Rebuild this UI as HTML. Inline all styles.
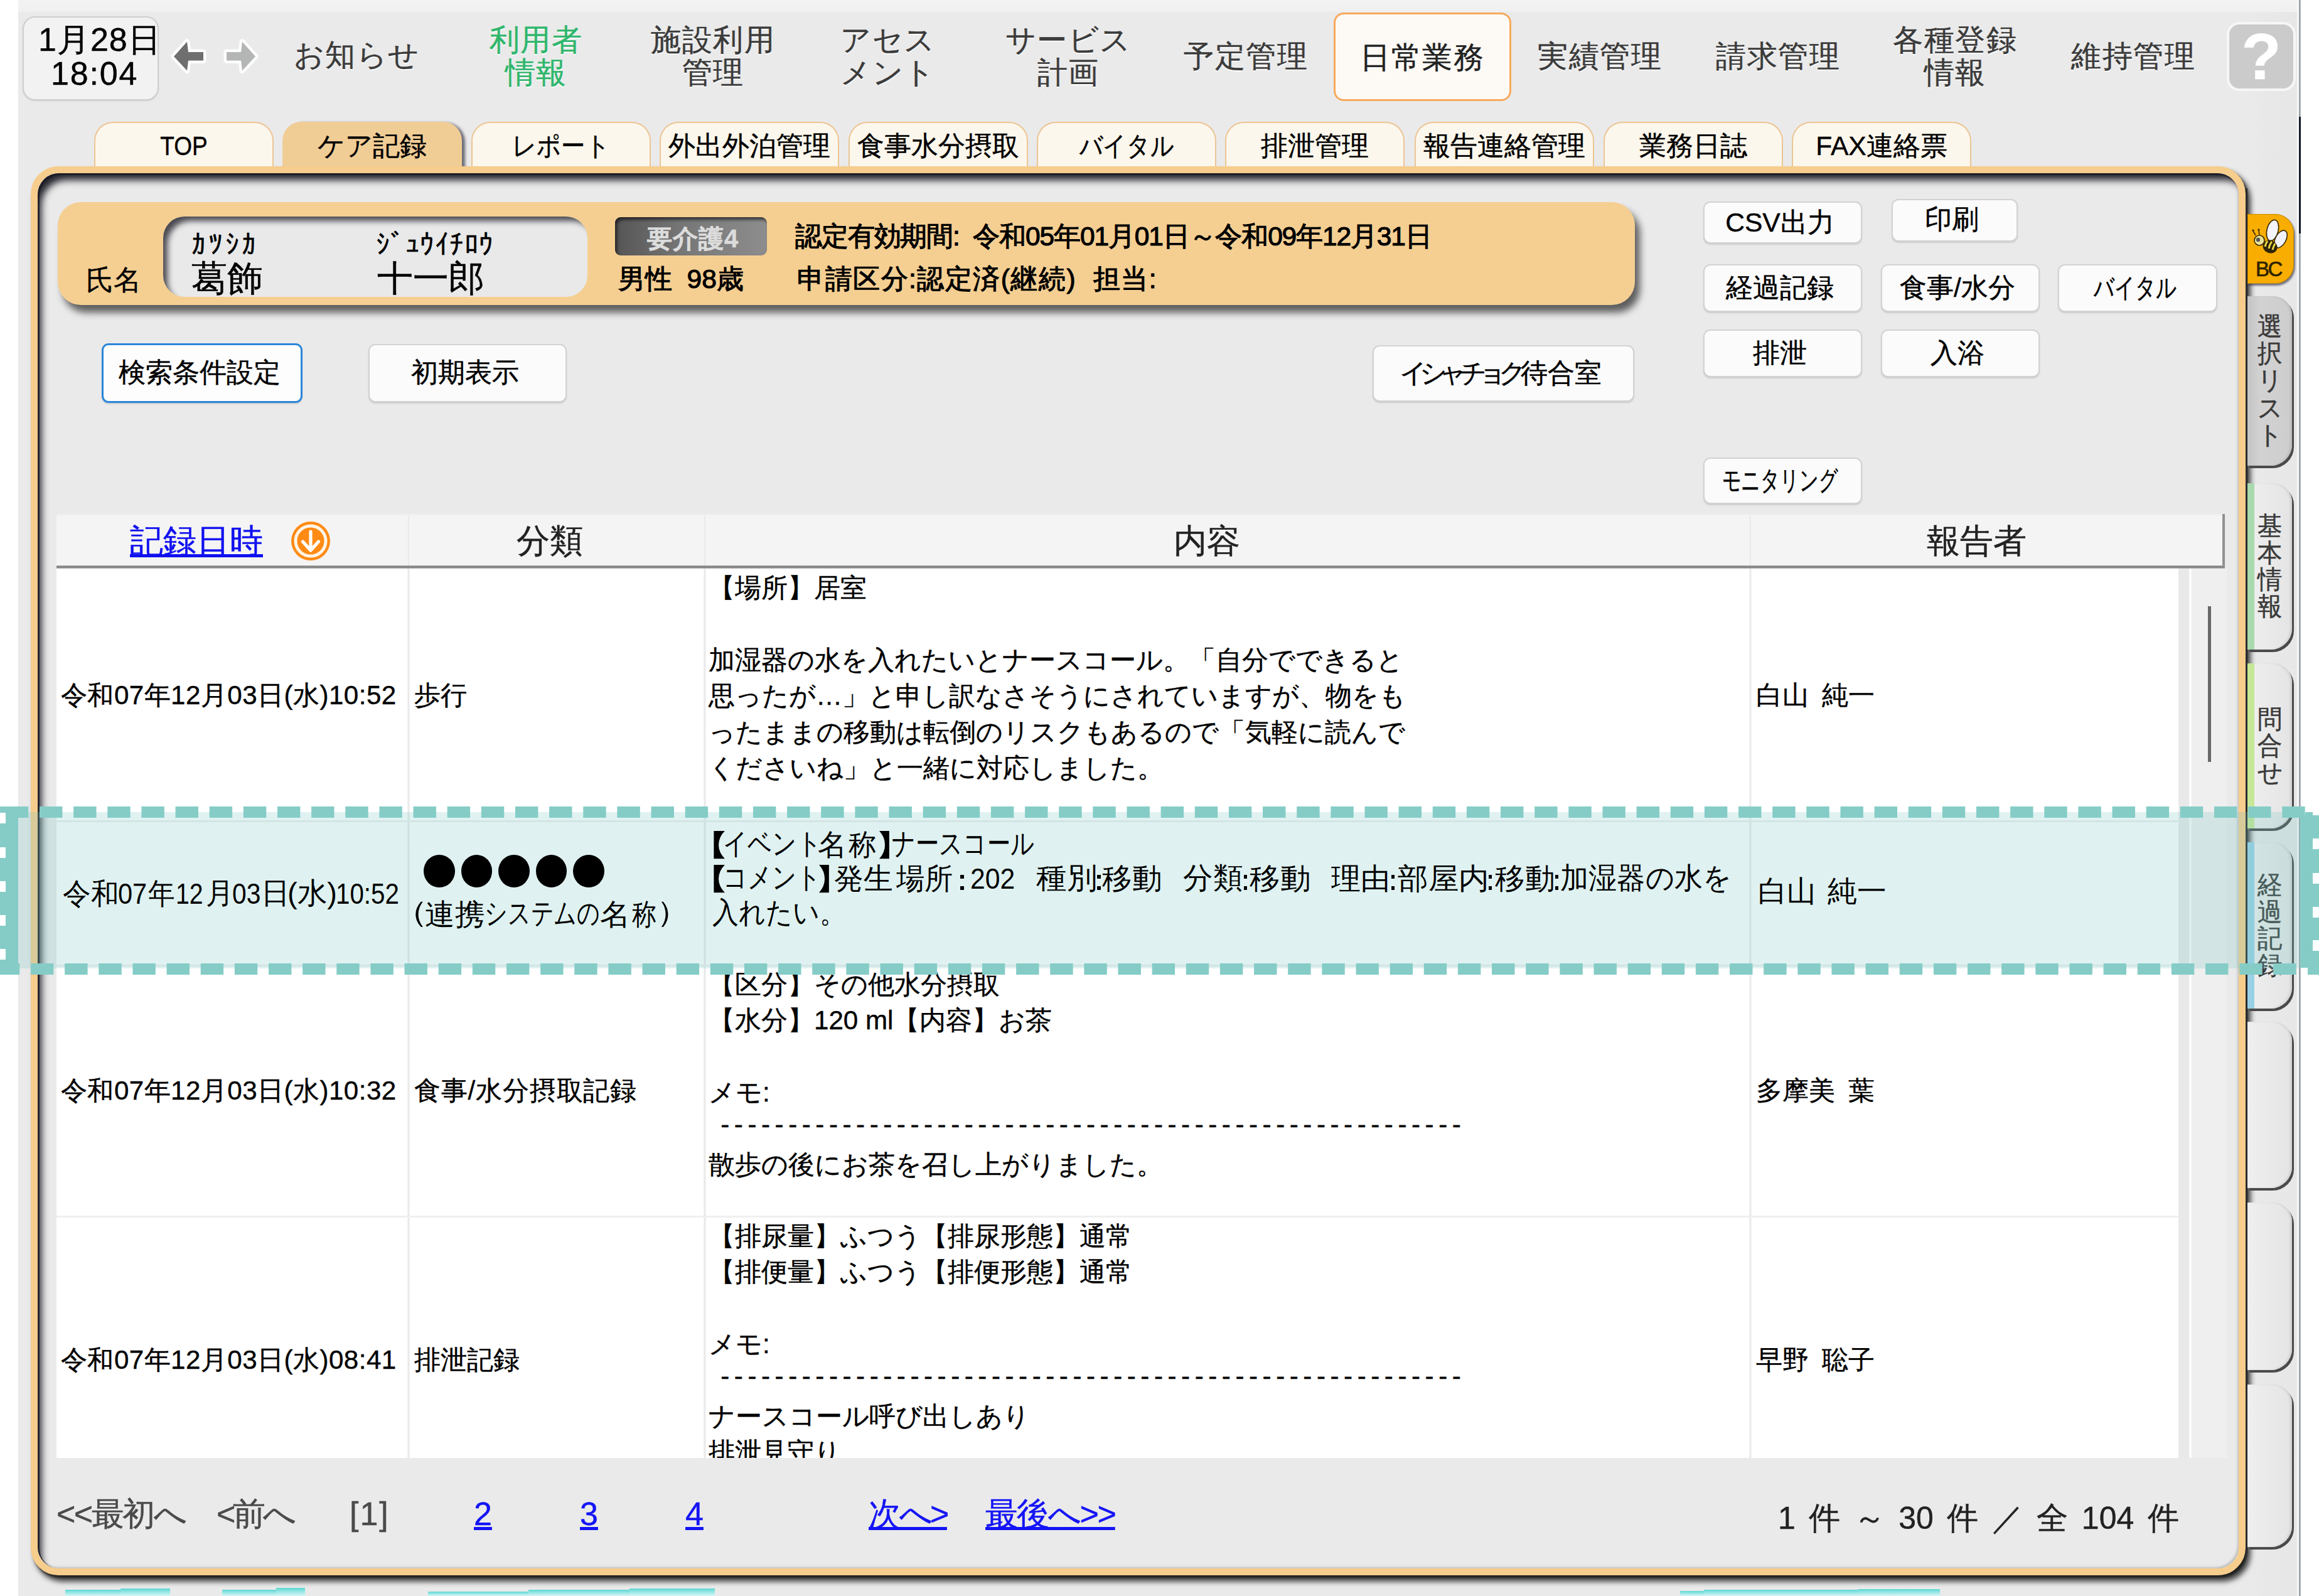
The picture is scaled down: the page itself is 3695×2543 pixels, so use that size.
<!DOCTYPE html>
<html lang="ja">
<head>
<meta charset="utf-8">
<title>ケア記録</title>
<style>
html,body{margin:0;padding:0;}
body{width:3695px;height:2543px;overflow:hidden;background:#fff;position:relative;
 font-family:"Liberation Sans",sans-serif;color:#000;}
.a{position:absolute;box-sizing:border-box;}
.t{position:absolute;white-space:nowrap;line-height:1;-webkit-text-stroke:.45px;}
.c{text-align:center;}
/* app background */
#bg{left:29px;top:0;width:3636px;height:2543px;background:#eaeaea;}
#topband{left:29px;top:0;width:3636px;height:19px;background:linear-gradient(#f3f3f3,#f0f0f0);}
#redge{left:3663px;top:0;width:3px;height:2543px;background:linear-gradient(90deg,#8f959c,#b9bdc2);}
#redge2{left:3663px;top:186px;width:3px;height:186px;background:#141a2a;}
/* date */
#date{left:36px;top:26px;width:217px;height:134px;border:2px solid #cfcfcf;border-radius:20px;background:#f2f2f2;
 box-shadow:0 1px 2px rgba(0,0,0,.12);}
.dt{font-size:52px;left:36px;width:217px;text-align:center;letter-spacing:-1px;}
/* nav */
.nav{font-size:48px;color:#3b3b3b;text-shadow:0 2px 0 #fff;letter-spacing:1.5px;text-align:center;width:400px;}
.nav.g{color:#2fb66c;}
#navact{left:2125px;top:20px;width:283px;height:141px;border:3px solid #f8a95c;border-radius:16px;background:#fdf9f4;}
#help{left:3548px;top:35px;width:110px;height:110px;border:4px solid #f6f6f6;border-radius:20px;background:#cbcbcb;}
#helpq{left:3548px;top:35px;width:110px;font-size:104px;font-weight:bold;color:#fff;text-align:center;}
/* tabs */
.tab{top:194px;width:286px;height:74px;border:2px solid #ecc595;border-bottom:none;border-radius:30px 30px 0 0;background:#fcf7ec;}
.tab.on{background:#f1cd96;border-color:#f1cd96;box-shadow:5px 2px 4px rgba(40,40,60,.65);}
.tabt{top:211.5px;width:286px;text-align:center;font-size:42.5px;}
/* main panel */
#panel{left:49px;top:265px;width:3529px;height:2245px;border:11px solid #f6cd8c;border-radius:44px;background:#eaeaea;
 box-shadow:7px 9px 9px 1px rgba(0,0,0,.72), 3px 4px 3px rgba(0,0,0,.5);}
#panelin{left:60px;top:276px;width:3507px;height:2223px;border-radius:34px;
 box-shadow:inset 12px 17px 12px -6px rgba(25,25,35,.95), inset 2px 2px 0 1px rgba(40,40,50,.8), inset -3px -3px 4px -2px rgba(0,0,0,.25);}
/* name panel */
#np{left:92px;top:322px;width:2513px;height:164px;border-radius:37px;background:#f5cf92;box-shadow:8px 12px 12px rgba(0,0,0,.6);}
#nbox{left:260px;top:345px;width:676px;height:128px;border-radius:34px;background:#e9e9e9;
 box-shadow:inset 10px 10px 10px -3px rgba(20,20,30,.75);}
#badge{left:980px;top:346px;width:242px;height:61px;border-radius:9px;background:linear-gradient(90deg,#555 0%,#777 45%,#8d8d8d 100%);
 box-shadow:inset 3px 4px 5px rgba(0,0,0,.6);}
/* buttons */
.btn{padding-right:9px;-webkit-text-stroke:.45px;border:2px solid #d2d2d2;border-radius:11px;background:#fbfbfb;box-shadow:0 2px 2px rgba(0,0,0,.12);
 font-size:42.5px;text-align:center;white-space:nowrap;}
.btn span{display:inline-block;}
/* table */
#thead{left:90px;top:819px;width:3455px;height:86px;background:#f4f4f4;border-right:4px solid #909090;
 box-shadow:inset 0 2px 0 #efefef;}
#tbody{left:90px;top:905px;width:3382px;height:1418px;background:#fff;}
#track{left:3471px;top:905px;width:77px;height:1418px;background:linear-gradient(90deg,#e9e9e9 0,#e9e9e9 17px,#fbfbfb 17px,#fbfbfb 21px,#efefef 21px,#efefef 100%);}
#thumb{left:3518px;top:966px;width:5px;height:248px;background:#686868;}
.vl{width:4px;background:linear-gradient(90deg,#f6f6f6,#e8e8e8 40%,#ececec 70%,#f9f9f9);}
.hl{height:3px;background:#efefef;left:90px;width:3382px;}
.th{font-size:53px;top:835px;color:#222;}
.cell{-webkit-text-stroke:.4px;font-size:42.15px;line-height:57.4px;white-space:pre;position:absolute;}
.hr{-webkit-text-stroke:0;font-size:46.5px;transform-origin:0 50%;white-space:pre;}
/* pager */
.pg{font-size:52px;top:2386px;color:#4a4a4a;}
.pg.l{color:#1414f5;text-decoration:underline;}
/* side tabs */
.st{left:3581px;width:71px;border-radius:0 30px 34px 0;background:linear-gradient(90deg,#efefef,#e4e4e4);
 box-shadow:3px 4px 0 0 #4a4a4a, inset -3px 0 3px rgba(0,0,0,.08);}
.strip{left:3581px;width:11px;}
.stt{left:3594.5px;width:44px;font-size:41px;transform:scaleX(.96);-webkit-text-stroke:.5px #3a3a3a;line-height:45px;text-align:center;white-space:normal;color:#3a3a3a;word-break:break-all;}
</style>
</head>
<body>
<div class="a" id="bg"></div>
<div class="a" id="topband"></div>
<div class="a" id="redge"></div>
<div class="a" id="redge2"></div>

<!-- SIDE -->
<div class="a" style="left:3581px;top:19px;width:79px;height:2524px;background:linear-gradient(90deg,#eaeaea 0,#e8e8e8 40px,#e7e7e7 100%)"></div>
<div class="a" style="left:3660px;top:0;width:3px;height:2543px;background:#f8f8f8"></div>


<!-- TOP -->
<div id="top">
<div class="a" id="date"></div>
<div class="t" style="left:61px;top:37px;font-size:52px;letter-spacing:1px">1月28日</div>
<div class="t" style="left:81px;top:91px;font-size:52px;letter-spacing:1.8px">18:04</div>
<svg class="a" style="left:262px;top:52px" width="160" height="76" viewBox="262 52 160 76">
 <path d="M277 90 L298 66.5 L300 83 L324 83 L324 96.5 L300 96.5 L298 112.5 Z" fill="#6f6f6f" stroke="#fdfdfd" stroke-width="9" stroke-linejoin="round"/>
 <path d="M277 90 L298 66.5 L300 83 L324 83 L324 96.5 L300 96.5 L298 112.5 Z" fill="#6f6f6f"/>
 <path d="M407 90 L386 66.5 L384 83 L361 83 L361 96.5 L384 96.5 L386 112.5 Z" fill="#b4b6b5" stroke="#fdfdfd" stroke-width="9" stroke-linejoin="round"/>
 <path d="M407 90 L386 66.5 L384 83 L361 83 L361 96.5 L384 96.5 L386 112.5 Z" fill="#b4b6b5"/>
</svg>
<div class="t nav" style="left:368px;top:64px">お知らせ</div>
<div class="t nav g" style="left:654px;top:40px">利用者</div>
<div class="t nav g" style="left:654px;top:92px">情報</div>
<div class="t nav" style="left:936px;top:40px">施設利用</div>
<div class="t nav" style="left:936px;top:92px">管理</div>
<div class="t nav" style="left:1215px;top:40px">アセス</div>
<div class="t nav" style="left:1215px;top:92px">メント</div>
<div class="t nav" style="left:1502px;top:40px">サービス</div>
<div class="t nav" style="left:1502px;top:92px">計画</div>
<div class="t nav" style="left:1785px;top:66px">予定管理</div>
<div class="a" id="navact"></div>
<div class="t nav" style="left:2066px;top:68px;color:#222">日常業務</div>
<div class="t nav" style="left:2349px;top:66px">実績管理</div>
<div class="t nav" style="left:2633px;top:66px">請求管理</div>
<div class="t nav" style="left:2915px;top:40px">各種登録</div>
<div class="t nav" style="left:2915px;top:92px">情報</div>
<div class="t nav" style="left:3199px;top:66px">維持管理</div>
<div class="a" id="help"></div>
<div class="t" id="helpq" style="top:38px">?</div>
<div class="a tab" style="left:150px"></div><div class="t tabt" style="left:150px;transform:scaleX(.87)">TOP</div>
<div class="a tab on" style="left:450px"></div><div class="t tabt" style="left:450px">ケア記録</div>
<div class="a tab" style="left:751px"></div><div class="t tabt" style="left:751px;transform:scaleX(.89)">レポート</div>
<div class="a tab" style="left:1051px"></div><div class="t tabt" style="left:1051px">外出外泊管理</div>
<div class="a tab" style="left:1352px"></div><div class="t tabt" style="left:1352px">食事水分摂取</div>
<div class="a tab" style="left:1652px"></div><div class="t tabt" style="left:1652px;transform:scaleX(.857)">バイタル</div>
<div class="a tab" style="left:1952px"></div><div class="t tabt" style="left:1952px">排泄管理</div>
<div class="a tab" style="left:2254px"></div><div class="t tabt" style="left:2254px">報告連絡管理</div>
<div class="a tab" style="left:2555px"></div><div class="t tabt" style="left:2555px">業務日誌</div>
<div class="a tab" style="left:2855px"></div><div class="t tabt" style="left:2855px">FAX連絡票</div>
</div>

<!-- PANEL -->
<div class="a" id="panel"></div>
<div id="content">
<div class="a" id="np"></div>
<div class="a" id="nbox"></div>
<div class="t" style="left:137px;top:424px;font-size:44px">氏名</div>
<div class="t" style="left:305px;top:367px;font-size:45px;letter-spacing:3.8px">ｶﾂｼｶ</div>
<div class="t" style="left:599px;top:367px;font-size:45px;letter-spacing:0.5px">ｼﾞｭｳｲﾁﾛｳ</div>
<div class="t" style="left:305px;top:415px;font-size:57px">葛飾</div>
<div class="t" style="left:601px;top:415px;font-size:57px">十一郎</div>
<div class="a" id="badge"></div>
<div class="t c" style="left:983px;top:360px;width:242px;font-size:40px;font-weight:bold;color:#dcdcdc;letter-spacing:1px">要介護4</div>
<div class="t" style="left:985px;top:424px;font-size:42.5px;-webkit-text-stroke:1.1px #000">男性&nbsp; 98歳</div>
<div class="t" style="left:1267px;top:356px;font-size:42.5px;-webkit-text-stroke:1.1px #000;letter-spacing:-1.15px;word-spacing:11px">認定有効期間: 令和05年01月01日～令和09年12月31日</div>
<div class="t" style="left:1270px;top:424px;font-size:42.5px;-webkit-text-stroke:1.1px #000;letter-spacing:1.5px">申請区分:認定済(継続)&nbsp; 担当:</div>

<div class="a btn" style="left:162px;top:547px;width:320px;height:95px;border:3px solid #2a86d8;line-height:87px;background:#fdfdfd">検索条件設定</div>
<div class="a btn" style="left:587px;top:548px;width:316px;height:93px;line-height:87px">初期表示</div>
<div class="a btn" style="left:2187px;top:550px;width:417px;height:90px;line-height:86px"><span style="letter-spacing:-12.5px">イシャチョク</span>&#8202;待合室</div>
<div class="a btn" style="left:2714px;top:321px;width:253px;height:67px;line-height:63px">CSV出力</div>
<div class="a btn" style="left:3014px;top:317px;width:201px;height:68px;line-height:62px">印刷</div>
<div class="a btn" style="left:2714px;top:421px;width:253px;height:76px;line-height:72px">経過記録</div>
<div class="a btn" style="left:2997px;top:421px;width:253px;height:76px;line-height:72px">食事/水分</div>
<div class="a btn" style="left:3279px;top:421px;width:254px;height:76px;line-height:72px"><span style="transform:scaleX(.755)">バイタル</span></div>
<div class="a btn" style="left:2714px;top:525px;width:253px;height:76px;line-height:72px">排泄</div>
<div class="a btn" style="left:2997px;top:525px;width:253px;height:76px;line-height:72px">入浴</div>
<div class="a btn" style="left:2714px;top:729px;width:253px;height:74px;line-height:70px"><span style="transform:scaleX(.70);margin:0 -20px">モニタリング</span></div>

<div class="a" id="thead"></div>
<div class="a" id="tbody"></div>
<div class="a" id="track"></div>
<div class="a" id="thumb"></div>
<div class="a vl" style="left:649px;top:822px;height:1501px"></div>
<div class="a vl" style="left:1121px;top:822px;height:1501px"></div>
<div class="a vl" style="left:2787px;top:822px;height:1501px"></div>
<div class="a" style="left:90px;top:901px;width:3455px;height:5px;background:linear-gradient(#a8a8a8,#7e7e7e 40%,#8c8c8c 70%,#c8c8c8)"></div>
<div class="a hl" style="top:1307px"></div>
<div class="a hl" style="top:1537px"></div>
<div class="a hl" style="top:1937px"></div>
<div class="t th" style="left:207px;color:#1010f0;text-decoration:underline">記録日時</div>
<svg class="a" style="left:460px;top:827px" width="70" height="70" viewBox="-35 -35 70 70">
 <circle r="31" fill="#ff8a14"/><circle r="24" fill="none" stroke="#fff4e6" stroke-width="5"/>
 <path d="M0 -15 L0 13 M-12.5 1 L0 15 L12.5 1" stroke="#fff" stroke-width="5.2" fill="none" stroke-linecap="round" stroke-linejoin="round"/>
</svg>
<div class="t th" style="left:823px">分類</div>
<div class="t th" style="left:1870px">内容</div>
<div class="t th" style="left:3070px">報告者</div>

<div class="cell" style="left:97px;top:1079px;letter-spacing:.45px">令和07年12月03日(水)10:52</div>
<div class="cell" style="left:660px;top:1079px">歩行</div>
<div class="cell" style="left:1129px;top:908px">【場所】居室

加湿器の水を入れたいとナースコール。「自分でできると
思ったが…」と申し訳なさそうにされていますが、物をも
ったままの移動は転倒のリスクもあるので「気軽に読んで
くださいね」と一緒に対応しました。</div>
<div class="cell" style="left:2798px;top:1079px;word-spacing:9px">白山 純一</div>

<div class="cell" style="left:97px;top:1709px;letter-spacing:.45px">令和07年12月03日(水)10:32</div>
<div class="cell" style="left:660px;top:1709px;letter-spacing:.8px">食事/水分摂取記録</div>
<div class="cell" style="left:1129px;top:1540px">【区分】その他水分摂取
【水分】120 ml【内容】お茶

メモ:
<span style="letter-spacing:7.55px;position:relative;top:-6.5px"> -------------------------------------------------------</span>
散歩の後にお茶を召し上がりました。</div>
<div class="cell" style="left:2798px;top:1709px;word-spacing:9px">多摩美 葉</div>

<div class="cell" style="left:97px;top:2137.5px;letter-spacing:.45px">令和07年12月03日(水)08:41</div>
<div class="cell" style="left:660px;top:2137.5px">排泄記録</div>
<div class="a" style="left:1125px;top:1940px;width:1660px;height:383px;overflow:hidden"><div class="cell" style="left:4px;top:1px">【排尿量】ふつう【排尿形態】通常
【排便量】ふつう【排便形態】通常

メモ:
<span style="letter-spacing:7.55px;position:relative;top:-6.5px"> -------------------------------------------------------</span>
ナースコール呼び出しあり
排泄見守り</div></div>
<div class="cell" style="left:2798px;top:2137.5px;word-spacing:9px">早野 聡子</div>

<div class="t pg" style="left:90px;letter-spacing:-2.5px">&lt;&lt;最初へ</div>
<div class="t pg" style="left:345px;letter-spacing:-4px">&lt;前へ</div>
<div class="t pg" style="left:557px;letter-spacing:2px">[1]</div>
<div class="t pg l" style="left:755px">2</div>
<div class="t pg l" style="left:924px">3</div>
<div class="t pg l" style="left:1092px">4</div>
<div class="t pg l" style="left:1384px;letter-spacing:-3.5px">次へ&gt;</div>
<div class="t pg l" style="left:1570px;letter-spacing:-2.2px">最後へ&gt;&gt;</div>
<div class="t pg" style="left:2833px;font-size:50px;top:2394px;color:#222;word-spacing:7.6px">1 件 ～ 30 件 ／ 全 104 件</div>
</div>
<div class="a" id="panelin"></div>
<div class="a" style="left:3578px;top:300px;width:3px;height:2175px;background:#2a2a2e"></div>
<div id="side">
<div class="a" style="left:3581px;top:341px;width:74px;height:111px;border-radius:0 30px 30px 0;background:#f8ad00;box-shadow:2px 3px 3px rgba(30,30,60,.6), inset 0 0 0 1px #c98a00"></div>
<svg class="a" style="left:3581px;top:341px" width="74" height="111" viewBox="0 0 74 111">
 <g stroke="#3a2a00" stroke-width="1.6">
 <ellipse cx="40" cy="26" rx="9" ry="17" transform="rotate(14 40 26)" fill="#f4f4fb"/>
 <ellipse cx="53" cy="40" rx="8.5" ry="15" transform="rotate(28 53 40)" fill="#f1f1f9"/>
 <ellipse cx="36" cy="52" rx="11" ry="9.5" transform="rotate(25 36 52)" fill="#2a2208"/>
 <circle cx="19" cy="42" r="8" fill="#e9e29a"/>
 </g>
 <path d="M28 52 q2 -7 4 -9 M34 55 q2 -8 5 -11 M40 57 q2 -7 4 -10" stroke="#e8d84a" stroke-width="3" fill="none"/>
 <circle cx="17" cy="41" r="3.2" fill="#555"/>
 <path d="M13 34 L9 27 M19 33 L18 26" stroke="#3a2a00" stroke-width="1.6"/>
 <circle cx="9" cy="26" r="1.6" fill="#3a2a00"/><circle cx="18" cy="25" r="1.6" fill="#3a2a00"/>
</svg>
<div class="t" style="left:3594px;top:412px;font-size:33px;color:#2e2200;letter-spacing:-2.5px;-webkit-text-stroke:.7px #2e2200">BC</div>
<div class="a st" style="top:472px;height:270px;background:linear-gradient(90deg,#c4c4c4,#d2d2d2 30%,#cdcdcd);"></div>
<div class="t stt" style="top:498.5px;line-height:43.4px">選<br>択<br>リ<br>ス<br>ト</div>
<div class="a st" style="top:770px;height:265px;"></div>
<div class="a strip" style="top:770px;height:265px;background:#a9d9ae"></div>
<div class="t stt" style="top:817.3px;line-height:42.6px">基<br>本<br>情<br>報</div>
<div class="a st" style="top:1057px;height:263px;"></div>
<div class="a strip" style="top:1057px;height:263px;background:#c6e896"></div>
<div class="t stt" style="top:1124.6px;line-height:42.6px">問<br>合<br>せ</div>
<div class="a st" style="top:1342px;height:265px;"></div>
<div class="a strip" style="top:1342px;height:265px;background:#98d0e6"></div>
<div class="t stt" style="top:1389.3px;line-height:42.6px">経<br>過<br>記<br>録</div>
<div class="a st" style="top:1628px;height:265px;"></div>
<div class="a st" style="top:1916px;height:267px;"></div>
<div class="a st" style="top:2206px;height:259px;"></div>
</div>

<!-- OVERLAY -->
<div class="a" style="left:104px;top:2533px;width:167px;height:10px;background:linear-gradient(#5cd6d3,#8fe5e2 40%,#d8f6f5)"></div><div class="a" style="left:192px;top:2531px;width:79px;height:12px;background:linear-gradient(#5cd6d3,#8fe5e2 40%,#d8f6f5)"></div><div class="a" style="left:354px;top:2533px;width:132px;height:10px;background:linear-gradient(#5cd6d3,#8fe5e2 40%,#d8f6f5)"></div><div class="a" style="left:440px;top:2530px;width:46px;height:13px;background:linear-gradient(#5cd6d3,#8fe5e2 40%,#d8f6f5)"></div><div class="a" style="left:682px;top:2536px;width:457px;height:7px;background:linear-gradient(#5cd6d3,#8fe5e2 40%,#d8f6f5)"></div><div class="a" style="left:842px;top:2533px;width:297px;height:10px;background:linear-gradient(#5cd6d3,#8fe5e2 40%,#d8f6f5)"></div><div class="a" style="left:1003px;top:2531px;width:136px;height:12px;background:linear-gradient(#5cd6d3,#8fe5e2 40%,#d8f6f5)"></div><div class="a" style="left:2677px;top:2535px;width:414px;height:8px;background:linear-gradient(#5cd6d3,#8fe5e2 40%,#d8f6f5)"></div><div class="a" style="left:2715px;top:2533px;width:376px;height:10px;background:linear-gradient(#5cd6d3,#8fe5e2 40%,#d8f6f5)"></div><div class="a" style="left:2960px;top:2532px;width:131px;height:11px;background:linear-gradient(#5cd6d3,#8fe5e2 40%,#d8f6f5)"></div>
<div id="overlay">
<div class="a" style="left:29px;top:1294px;width:3636px;height:249px;background:rgba(120,200,196,.235)"></div>
<div class="a" style="left:675.4px;top:1362px;width:49.5px;height:51.5px;border-radius:50%;background:#000"></div><div class="a" style="left:734.8px;top:1362px;width:49.5px;height:51.5px;border-radius:50%;background:#000"></div><div class="a" style="left:794.2px;top:1362px;width:49.5px;height:51.5px;border-radius:50%;background:#000"></div><div class="a" style="left:853.6px;top:1362px;width:49.5px;height:51.5px;border-radius:50%;background:#000"></div><div class="a" style="left:913.0px;top:1362px;width:49.5px;height:51.5px;border-radius:50%;background:#000"></div>
<div class="t hr" style="left:1092.6px;top:1324.0px;transform:scaleX(1.5083)">【</div>
<div class="t hr" style="left:1151.9px;top:1321.0px;transform:scaleX(0.8171)">イベント</div>
<div class="t hr" style="left:1302.7px;top:1323.0px;transform:scaleX(0.9811)">名</div>
<div class="t hr" style="left:1351.8px;top:1323.0px;transform:scaleX(0.9391)">称</div>
<div class="t hr" style="left:1392.6px;top:1324.0px;transform:scaleX(1.3583)">】</div>
<div class="t hr" style="left:1420.9px;top:1321.0px;transform:scaleX(0.7933)">ナースコール</div>
<div class="t hr" style="left:1092.6px;top:1377.7px;transform:scaleX(1.5083)">【</div>
<div class="t hr" style="left:1152.3px;top:1374.7px;transform:scaleX(0.815)">コメント</div>
<div class="t hr" style="left:1296.6px;top:1377.7px;transform:scaleX(1.3583)">】</div>
<div class="t hr" style="left:1329.0px;top:1377.2px;transform:scaleX(0.9956)">発生</div>
<div class="t hr" style="left:1428.0px;top:1376.7px;transform:scaleX(0.963)">場所</div>
<div class="a" style="left:1530.0px;top:1394px;width:5.6px;height:6px;background:#000"></div><div class="a" style="left:1530.0px;top:1412px;width:5.6px;height:6px;background:#000"></div><div class="t hr" style="left:1545.6px;top:1376.7px;transform:scaleX(0.9178)">202</div>
<div class="t hr" style="left:1650.7px;top:1375.7px;transform:scaleX(1.0341)">種別</div>
<div class="a" style="left:1748.0px;top:1394px;width:5.6px;height:6px;background:#000"></div><div class="a" style="left:1748.0px;top:1412px;width:5.6px;height:6px;background:#000"></div><div class="t hr" style="left:1755.7px;top:1376.7px;transform:scaleX(1.0143)">移動</div>
<div class="t hr" style="left:1885.0px;top:1376.2px;transform:scaleX(1.011)">分類</div>
<div class="a" style="left:1981.7px;top:1394px;width:5.6px;height:6px;background:#000"></div><div class="a" style="left:1981.7px;top:1412px;width:5.6px;height:6px;background:#000"></div><div class="t hr" style="left:1990.7px;top:1376.7px;transform:scaleX(1.0352)">移動</div>
<div class="t hr" style="left:2121.0px;top:1377.2px;transform:scaleX(0.9989)">理由</div>
<div class="a" style="left:2216.9px;top:1394px;width:5.6px;height:6px;background:#000"></div><div class="a" style="left:2216.9px;top:1412px;width:5.6px;height:6px;background:#000"></div><div class="t hr" style="left:2227.0px;top:1377.2px;transform:scaleX(1.0326)">部屋内</div>
<div class="a" style="left:2371.9px;top:1394px;width:5.6px;height:6px;background:#000"></div><div class="a" style="left:2371.9px;top:1412px;width:5.6px;height:6px;background:#000"></div><div class="t hr" style="left:2381.9px;top:1376.7px;transform:scaleX(1.0154)">移動</div>
<div class="a" style="left:2477.9px;top:1394px;width:5.6px;height:6px;background:#000"></div><div class="a" style="left:2477.9px;top:1412px;width:5.6px;height:6px;background:#000"></div><div class="t hr" style="left:2485.8px;top:1376.2px;transform:scaleX(0.962)">加湿器の水を</div>
<div class="t hr" style="left:1135.1px;top:1431.0px;transform:scaleX(0.8927)">入れたい。</div>
<div class="t hr" style="left:100.1px;top:1401.4px;transform:scaleX(0.9494)">令和</div>
<div class="t hr" style="left:188.2px;top:1401.4px;transform:scaleX(0.8936)">07</div>
<div class="t hr" style="left:235.7px;top:1401.4px;transform:scaleX(0.9068)">年</div>
<div class="t hr" style="left:279.6px;top:1401.4px;transform:scaleX(0.8444)">12</div>
<div class="t hr" style="left:328.1px;top:1400.4px;transform:scaleX(0.9429)">月</div>
<div class="t hr" style="left:370.2px;top:1401.4px;transform:scaleX(0.875)">03</div>
<div class="t hr" style="left:416.2px;top:1400.4px;transform:scaleX(0.9688)">日</div>
<div class="t hr" style="left:458.0px;top:1399.9px;transform:scaleX(1.0139)">(水)</div>
<div class="t hr" style="left:535.1px;top:1401.4px;transform:scaleX(0.8673)">10:52</div>
<div class="t hr" style="left:625.1px;top:1429.6px;transform:scaleX(1.2222)">（</div>
<div class="t hr" style="left:676.5px;top:1433.6px;transform:scaleX(1.0111)">連携</div>
<div class="t hr" style="left:772.2px;top:1431.6px;transform:scaleX(0.7672)">システムの</div>
<div class="t hr" style="left:955.9px;top:1433.6px;transform:scaleX(1.027)">名</div>
<div class="t hr" style="left:1007.0px;top:1433.6px;transform:scaleX(0.8261)">称</div>
<div class="t hr" style="left:1046.0px;top:1429.6px;transform:scaleX(1.12)">）</div>
<div class="t hr" style="left:2801.0px;top:1397.0px;transform:scaleX(0.9884)">白山</div>
<div class="t hr" style="left:2912.0px;top:1397.0px;transform:scaleX(0.9945)">純一</div>
<div class="a" style="left:0;top:1285px;width:3673px;height:17.8px;background:repeating-linear-gradient(90deg,#85ccc7 0,#85ccc7 36px,transparent 36px,transparent 54.154px);background-position:8.85px 0;background-size:54.154px 100%;background-repeat:repeat-x"></div>
<div class="a" style="left:0;top:1535px;width:3660px;height:17.8px;background:repeating-linear-gradient(90deg,#85ccc7 0,#85ccc7 36px,transparent 36px,transparent 54.154px);background-position:-5.15px 0;background-size:54.154px 100%;background-repeat:repeat-x"></div>
<div class="a" style="left:0;top:1285px;width:29px;height:267px;background:#85ccc7"></div>
<div class="a" style="left:3665px;top:1299px;width:30px;height:243px;background:#85ccc7"></div>
<div class="a" style="left:3673px;top:1294px;width:12px;height:6px;background:#85ccc7"></div>
<div class="a" style="left:3677px;top:1535px;width:18px;height:17.8px;background:#85ccc7"></div>
<div class="a" style="left:0;top:1295px;width:9px;height:17px;background:#fff"></div><div class="a" style="left:0;top:1350px;width:9px;height:17px;background:#fff"></div><div class="a" style="left:0;top:1404px;width:9px;height:17px;background:#fff"></div><div class="a" style="left:0;top:1458px;width:9px;height:17px;background:#fff"></div><div class="a" style="left:0;top:1512px;width:9px;height:17px;background:#fff"></div>
<div class="a" style="left:3685px;top:1336px;width:10px;height:17px;background:#fff"></div><div class="a" style="left:3685px;top:1391px;width:10px;height:17px;background:#fff"></div><div class="a" style="left:3685px;top:1445px;width:10px;height:17px;background:#fff"></div><div class="a" style="left:3685px;top:1498px;width:10px;height:17px;background:#fff"></div>
</div>
</body>
</html>
